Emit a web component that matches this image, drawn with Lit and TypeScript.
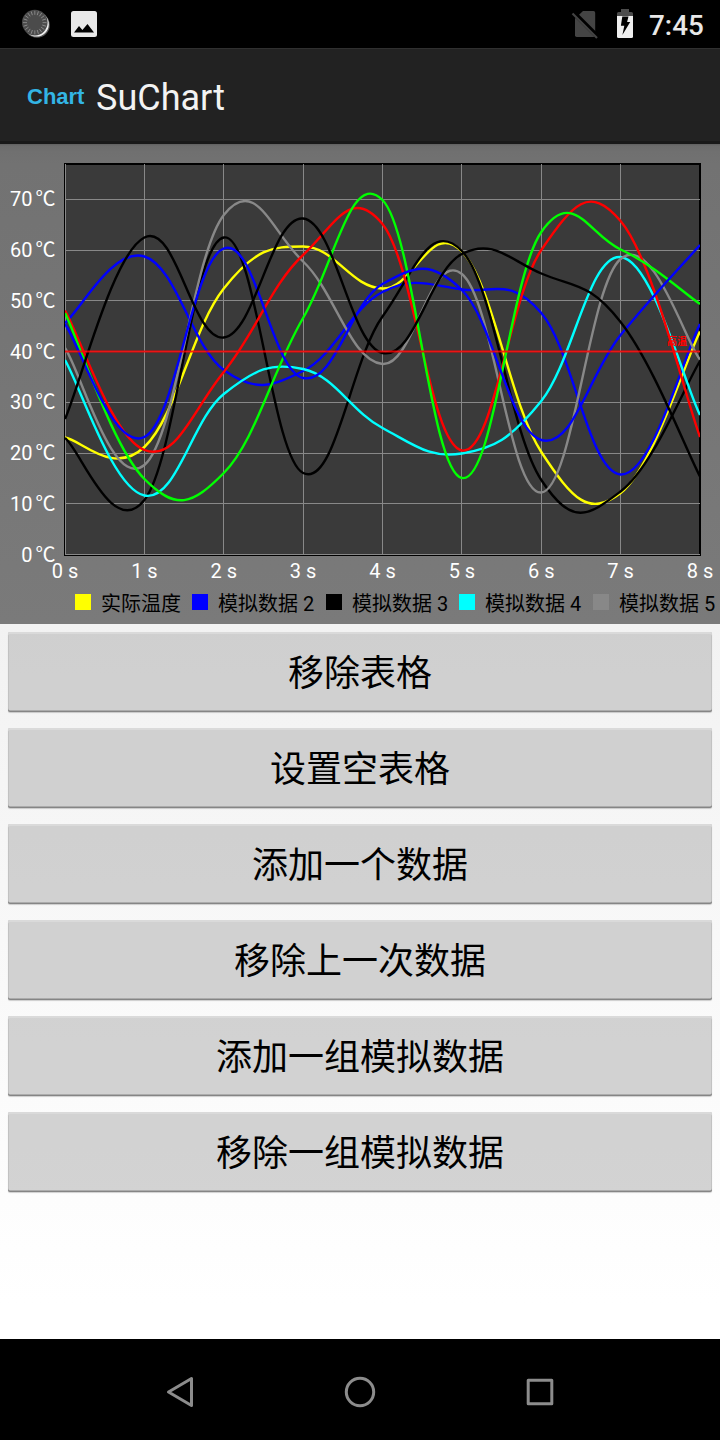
import { LitElement, html, svg, css } from "lit";
import { customElement } from "lit/decorators.js";

interface Series {
  color: string;
  ys: number[];
}

const XS = [65, 144.4, 223.8, 303.1, 382.5, 461.9, 541.3, 620.6, 700];

const SERIES: Series[] = [
  { color: "#ffff00", ys: [437.5, 447, 288.5, 246.5, 288.5, 251.5, 452, 493, 331.5] },
  { color: "#0000ff", ys: [323, 256.5, 370, 371, 292, 289.5, 313, 474.5, 324] },
  { color: "#000000", ys: [438, 500, 237.5, 473, 316.5, 251, 480, 491.5, 361] },
  { color: "#00ffff", ys: [360, 495.5, 394, 369, 428, 453.5, 401, 257, 415] },
  { color: "#888888", ys: [348, 465, 215, 261.5, 364, 274, 492.5, 259, 359.5] },
  { color: "#ff0000", ys: [310.5, 450, 372, 255, 224, 450.5, 250, 221, 437] },
  { color: "#00ff00", ys: [313, 479, 473, 318, 200, 478, 232, 249.5, 304] },
  { color: "#0000ff", ys: [324, 437, 248.5, 378, 284, 290, 440, 335, 245] },
  { color: "#000000", ys: [419, 237.5, 337.5, 218.5, 353, 254, 273.5, 322, 476.5] },
];

const LEGEND = [
  { x: 75, color: "#ffff00", label: "实际温度" },
  { x: 192, color: "#0000ff", label: "模拟数据 2" },
  { x: 326, color: "#000000", label: "模拟数据 3" },
  { x: 459, color: "#00ffff", label: "模拟数据 4" },
  { x: 593, color: "#888888", label: "模拟数据 5" },
];

const Y_LINES = [199.5, 250.5, 300.5, 351.5, 402.5, 453.5, 503.5, 554.5];
const X_LINES = [65.5, 144.5, 223.5, 303.5, 382.5, 461.5, 541.5, 620.5];

const BUTTONS = ["移除表格", "设置空表格", "添加一个数据", "移除上一次数据", "添加一组模拟数据", "移除一组模拟数据"];

/** Cubic curve through every sample, with control points at 20% of the neighbour distance. */
function smooth(ys: number[]): string {
  const k = 0.2;
  const at = (i: number) => {
    const j = Math.max(0, Math.min(ys.length - 1, i));
    return [XS[j], ys[j]];
  };
  let d = `M${XS[0]} ${ys[0]}`;
  for (let i = 1; i < ys.length; i++) {
    const pp = at(i - 2), p = at(i - 1), c = at(i), n = at(i + 1);
    d += `C${p[0] + (c[0] - pp[0]) * k} ${p[1] + (c[1] - pp[1]) * k} ${c[0] - (n[0] - p[0]) * k} ${c[1] - (n[1] - p[1]) * k} ${c[0]} ${c[1]}`;
  }
  return d;
}

@customElement("su-status-bar")
class StatusBar extends LitElement {
  static styles = css`
    :host { display: flex; align-items: center; height: 48px; background: #000; }
    svg { display: block; }
    .time {
      width: 71px; font: 500 27.800px/48px Roboto, sans-serif; color: #e8e8e8;
      padding-top: 2px; box-sizing: border-box; height: 48px;
    }
    .left { flex: 1; }
  `;
  render() {
    const ticks = Array.from({ length: 20 }, (_, i) => i * 18);
    return html`
      <svg class="left" height="48" viewBox="0 0 560 48" preserveAspectRatio="xMinYMin meet">
        <circle cx="37" cy="25" r="12.8" fill="#555" />
        <circle cx="36.5" cy="24.3" r="12.3" fill="#f0f0f0" />
        <circle cx="34.8" cy="22.6" r="12.8" fill="#4b4b4b" />
        ${ticks.map((a) => svg`<path d="M34.8 10.8v4" stroke="#8a8a8a" stroke-width="0.9" transform="rotate(${a} 34.8 22.6)" />`)}
        <rect x="71" y="11" width="26" height="26" rx="2.5" fill="#e8e8e8" />
        <path d="M74 32.6L79 26l3.4 4.1L87.5 24l6.5 8.6z" fill="#000" />
      </svg>
      <svg width="89" height="48" viewBox="560 0 89 48">
        <path d="M583 11h10.5q1.7 0 1.7 1.7v22.6q0 1.7-1.7 1.7h-16.800q-1.700 0-1.700-1.700V18.500z" fill="#444" />
        <path d="M573.500 12.500L598.500 37.500" stroke="#000" stroke-width="4.600" />
        <path d="M572.500 13.500L597 38" stroke="#444" stroke-width="2.200" />
        <path d="M621 9h8v3h2.500q1.500 0 1.500 1.500V16h-16v-2.500q0-1.500 1.500-1.500h2.500z" fill="#4c4c4c" />
        <path d="M617 16h16v20.500q0 1.500-1.500 1.500h-13q-1.500 0-1.500-1.500z" fill="#efefef" />
        <path d="M622.300 16.500h6.200l-1.400 5.500h3.100L622.400 35l1.900-9.300h-3.400z" fill="#000" />
      </svg>
      <div class="time">7:45</div>
    `;
  }
}

@customElement("su-action-bar")
class ActionBar extends LitElement {
  static styles = css`
    :host {
      display: flex; align-items: center; height: 96px; box-sizing: border-box;
      padding-left: 27px; gap: 11px; background: #222;
      border-top: 1px solid #303030; border-bottom: 3px solid #191919;
    }
    .logo { width: 58px; font: 700 22px/28px "Liberation Sans", sans-serif; color: #33b5e5; padding-top: 3px; }
    .title { font: 400 36px/48px Roboto, sans-serif; color: #f3f3f3; padding-top: 5px; }
  `;
  render() {
    return html`<div class="logo">Chart</div><div class="title">SuChart</div>`;
  }
}

@customElement("su-line-chart")
class LineChart extends LitElement {
  static styles = css`
    :host { display: block; height: 480px; background: linear-gradient(#606060 0, #6c6c6c 2px, #707070 8px, #727272 20px, #7a7a7a 100%); }
    svg { display: block; }
    text { font-family: Roboto, "Noto Sans CJK SC", sans-serif; font-size: 20px; }
    .axis { fill: #fff; }
    .y { text-anchor: end; }
    .x { text-anchor: middle; }
    .unit { font-family: "Noto Sans CJK SC", sans-serif; }
    .limit { fill: #f00; font-size: 10px; font-weight: 700; }
    .key { fill: #000; }
  `;
  render() {
    return html`
      <svg width="720" height="480" viewBox="0 144 720 480">
        <rect x="65" y="164" width="635" height="391" fill="#3a3a3a" stroke="#000" stroke-width="2" />
        ${Y_LINES.map((y) => svg`<path d="M65 ${y}H700" stroke="#888" />`)}
        ${X_LINES.map((x) => svg`<path d="M${x} 164V555" stroke="#888" />`)}
        <clipPath id="plot"><rect x="65" y="164" width="635" height="391" /></clipPath>
        <g clip-path="url(#plot)" fill="none" stroke-width="2.4">
          ${SERIES.map((s) => svg`<path d=${smooth(s.ys)} stroke=${s.color} />`)}
        </g>
        <path d="M65 351.500H700" stroke="#f00" stroke-opacity="0.850" stroke-width="2.200" />
        <text class="limit" x="667" y="345">高温</text>
        ${[70, 60, 50, 40, 30, 20, 10, 0].map(
          (v, i) => svg`<text class="axis y" x="32.500" y=${206 + i * 50.86}>${v}</text>
            <text class="axis unit" x="35.500" y=${206 + i * 50.86}>℃</text>`,
        )}
        ${XS.map((x, i) => svg`<text class="axis x" x=${x} y="578">${i} s</text>`)}
        ${LEGEND.map(
          (l) => svg`<rect x=${l.x} y="594" width="16" height="16" fill=${l.color} />
            <text class="key" x=${l.x + 26} y="610.500">${l.label}</text>`,
        )}
      </svg>
    `;
  }
}

@customElement("su-nav-bar")
class NavBar extends LitElement {
  static styles = css`
    :host { display: flex; justify-content: center; gap: 140px; height: 101px; background: #000; padding-top: 33px; box-sizing: border-box; }
    svg { display: block; width: 40px; height: 40px; fill: none; stroke: #8c8c8c; stroke-width: 3; stroke-linejoin: round; }
  `;
  render() {
    return html`
      <svg viewBox="0 0 40 40"><path d="M8.500 20L31.500 6.500v27z" /></svg>
      <svg viewBox="0 0 40 40"><circle cx="20" cy="20" r="13.700" /></svg>
      <svg viewBox="0 0 40 40"><rect x="8.200" y="8.200" width="23.600" height="23.600" /></svg>
    `;
  }
}

@customElement("app-root")
class AppRoot extends LitElement {
  static styles = css`
    :host { display: flex; flex-direction: column; width: 720px; height: 1440px; overflow: hidden; }
    .content {
      flex: 1; display: flex; flex-direction: column; gap: 16px; padding: 8px;
      background: linear-gradient(#f2f2f2, #fff 95%);
    }
    .btn {
      height: 80px; border: 0; padding: 3px 0 0; border-radius: 2px; color: #000;
      background: rgba(192, 192, 192, 0.7);
      box-shadow: inset 0 2px 0 #dadada, inset 0 -1.500px 0 #858585, inset 1px 0 0 #c2c2c2, inset -1px 0 0 #c2c2c2, 0 1px 1px rgba(0, 0, 0, 0.18);
      font: 400 36px/48px Roboto, "Noto Sans CJK SC", sans-serif;
    }
  `;
  render() {
    return html`
      <su-status-bar></su-status-bar>
      <su-action-bar></su-action-bar>
      <su-line-chart></su-line-chart>
      <div class="content">${BUTTONS.map((b) => html`<button class="btn">${b}</button>`)}</div>
      <su-nav-bar></su-nav-bar>
    `;
  }
}
